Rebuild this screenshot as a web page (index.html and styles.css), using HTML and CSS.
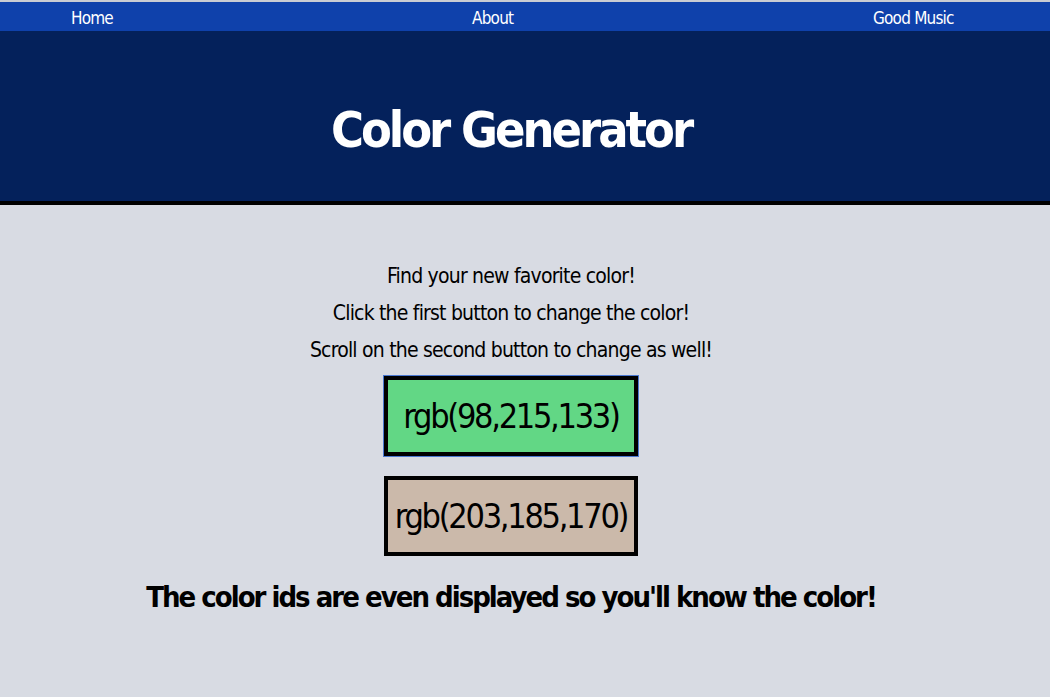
FILE: index.html
```html
<!DOCTYPE html>
<html>
<head>
<meta charset="utf-8">
<link rel="stylesheet" href="styles.css">
</head>
<body>
<nav class="nav">
  <a class="nav-link" href="#">Home</a>
  <a class="nav-link" href="#">About</a>
  <a class="nav-link" href="#">Good Music</a>
</nav>
<header class="header">
  <h1 class="title">Color Generator</h1>
</header>
<main class="main">
  <p class="intro">Find your new favorite color!<br>Click the first button to change the color!<br>Scroll on the second button to change as well!</p>
  <button class="color-btn focused" style="background: rgb(98,215,133)">rgb(98,215,133)</button>
  <button class="color-btn" style="background: rgb(203,185,170)">rgb(203,185,170)</button>
  <h2 class="outro">The color ids are even displayed so you'll know the color!</h2>
</main>
</body>
</html>
```
FILE: styles.css
```css
html, body {
  margin: 0;
  padding: 0;
}
body {
  background: #d8dbe3;
  font-family: "DejaVu Sans Condensed", "DejaVu Sans", sans-serif;
  font-stretch: condensed;
  border-top: 2px solid #c9ccd3;
  overflow-x: hidden;
}
.nav {
  display: flex;
  background: #0f41ab;
  height: 29px;
  align-items: center;
  padding-left: 71px;
  padding-top: 2px;
  box-sizing: border-box;
}
.nav-link {
  flex: 0 0 auto;
  width: 401px;
  color: #ffffff;
  text-decoration: none;
  font-size: 17px;
  letter-spacing: -0.8px;
}
.nav-link:last-child {
  width: auto;
}
.header {
  background: #04215b;
  border-bottom: 4px solid #000;
  display: flex;
  align-items: center;
  justify-content: center;
  padding-right: 28px;
  box-sizing: border-box;
  height: 174px;
}
.title {
  margin: 0;
  color: #fff;
  font-size: 50px;
  font-weight: 700;
  letter-spacing: -3px;
  padding-top: 28px;
}
.main {
  display: flex;
  flex-direction: column;
  align-items: center;
  padding-right: 28px;
  padding-top: 53px;
}
.intro {
  margin: 0;
  text-align: center;
  font-size: 21px;
  line-height: 37px;
  letter-spacing: -0.8px;
  color: #000;
}
.color-btn {
  margin-top: 7px;
  width: 254px;
  height: 80px;
  border: 4px solid #000;
  font-family: inherit;
  font-stretch: condensed;
  font-size: 34px;
  letter-spacing: -2.3px;
  color: #000;
  padding: 0;
}
.color-btn + .color-btn {
  margin-top: 20px;
}
.focused {
  outline: 1px solid #4a78d0;
}
.outro {
  margin: 24px 0 0;
  font-size: 29px;
  font-weight: 700;
  letter-spacing: -2px;
  white-space: nowrap;
  color: #000;
}
```
